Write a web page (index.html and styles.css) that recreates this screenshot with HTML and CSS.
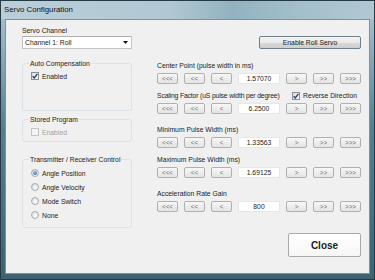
FILE: index.html
```html
<!DOCTYPE html>
<html lang="en">
<head>
    <meta charset="UTF-8">
    <title>Servo Configuration</title>
    <link rel="stylesheet" href="styles.css">
</head>
<body>
    <div class="window">
        <div class="titlebar">Servo Configuration</div>

        <div class="client">
            <!-- Left column: channel + option groups -->
            <div class="left-col">
                <div class="label">Servo Channel</div>
                <div class="combo">
                    <span>Channel 1: Roll</span>
                    <svg class="combo-arrow" width="5" height="3" viewBox="0 0 5 3"><path d="M0 0h5L2.5 3z" fill="#111"/></svg>
                </div>

                <fieldset class="group group-auto">
                    <legend>Auto Compensation</legend>
                    <div class="check-row">
                        <span class="check"><svg width="6" height="6" viewBox="0 0 6 6"><path d="M0.6 3.2L2.3 5L5.4 0.8" fill="none" stroke="#2b3f6c" stroke-width="1.3"/></svg></span>
                        Enabled
                    </div>
                </fieldset>

                <fieldset class="group group-stored">
                    <legend>Stored Program</legend>
                    <div class="check-row disabled">
                        <span class="check"></span>
                        Enabled
                    </div>
                </fieldset>

                <fieldset class="group group-control">
                    <legend>Transmitter / Receiver Control</legend>
                    <div class="radio-row"><span class="radio selected"></span>Angle Position</div>
                    <div class="radio-row"><span class="radio"></span>Angle Velocity</div>
                    <div class="radio-row"><span class="radio"></span>Mode Switch</div>
                    <div class="radio-row"><span class="radio"></span>None</div>
                </fieldset>
            </div>

            <!-- Right column: steppers -->
            <div class="right-col">
                <button class="btn btn-enable">Enable Roll Servo</button>

                <div class="param">
                    <div class="param-head"><span class="label">Center Point (pulse width in ms)</span></div>
                    <div class="stepper">
                        <button class="step">&lt;&lt;&lt;</button>
                        <button class="step">&lt;&lt;</button>
                        <button class="step">&lt;</button>
                        <div class="value">1.57070</div>
                        <button class="step">&gt;</button>
                        <button class="step">&gt;&gt;</button>
                        <button class="step">&gt;&gt;&gt;</button>
                    </div>
                </div>

                <div class="param tight">
                    <div class="param-head">
                        <span class="label narrow">Scaling Factor (uS pulse width per degree)</span>
                        <span class="check-row reverse">
                            <span class="check"><svg width="6" height="6" viewBox="0 0 6 6"><path d="M0.6 3.2L2.3 5L5.4 0.8" fill="none" stroke="#2b3f6c" stroke-width="1.3"/></svg></span>
                            Reverse Direction
                        </span>
                    </div>
                    <div class="stepper">
                        <button class="step">&lt;&lt;&lt;</button>
                        <button class="step">&lt;&lt;</button>
                        <button class="step">&lt;</button>
                        <div class="value">6.2500</div>
                        <button class="step">&gt;</button>
                        <button class="step">&gt;&gt;</button>
                        <button class="step">&gt;&gt;&gt;</button>
                    </div>
                </div>

                <div class="param">
                    <div class="param-head"><span class="label">Minimum Pulse Width (ms)</span></div>
                    <div class="stepper">
                        <button class="step">&lt;&lt;&lt;</button>
                        <button class="step">&lt;&lt;</button>
                        <button class="step">&lt;</button>
                        <div class="value">1.33563</div>
                        <button class="step">&gt;</button>
                        <button class="step">&gt;&gt;</button>
                        <button class="step">&gt;&gt;&gt;</button>
                    </div>
                </div>

                <div class="param tight">
                    <div class="param-head"><span class="label">Maximum Pulse Width (ms)</span></div>
                    <div class="stepper">
                        <button class="step">&lt;&lt;&lt;</button>
                        <button class="step">&lt;&lt;</button>
                        <button class="step">&lt;</button>
                        <div class="value">1.69125</div>
                        <button class="step">&gt;</button>
                        <button class="step">&gt;&gt;</button>
                        <button class="step">&gt;&gt;&gt;</button>
                    </div>
                </div>

                <div class="param">
                    <div class="param-head"><span class="label">Acceleration Rate Gain</span></div>
                    <div class="stepper">
                        <button class="step">&lt;&lt;&lt;</button>
                        <button class="step">&lt;&lt;</button>
                        <button class="step">&lt;</button>
                        <div class="value">800</div>
                        <button class="step">&gt;</button>
                        <button class="step">&gt;&gt;</button>
                        <button class="step">&gt;&gt;&gt;</button>
                    </div>
                </div>

                <button class="btn btn-close">Close</button>
            </div>
        </div>
    </div>
</body>
</html>
```

FILE: styles.css
```css
/* General */
body {
    margin: 0;
    font-family: 'Liberation Sans', Arial, sans-serif;
    font-size: 6.8px;
    color: #222;
    background: #fff;
}

.window {
    width: 375px;
    height: 280px;
    box-sizing: border-box;
    border: 1px solid #243b46;
    display: flex;
    flex-direction: column;
    background: linear-gradient(to bottom, #b3cad6 0, #9fbbc9 24px, #587f90 45%, #3f6272 100%);
}

/* Title bar */
.titlebar {
    height: 18px;
    padding-left: 3px;
    line-height: 18px;
    font-size: 7.8px;
    color: #111;
    background: linear-gradient(to right, #b9ced9 0%, #b1c8d4 45%, #93b2c1 62%, #a3bfcc 80%, #b0c8d3 100%);
}

.client {
    flex: 1;
    margin: 0 4px 5px 4px;
    border: 1px solid #7d929c;
    background: #f0f0f0;
    display: flex;
    gap: 25px;
    padding: 6px 8px 0 16px;
}

.label {
    line-height: 9px;
    white-space: nowrap;
}

.label.narrow {
    letter-spacing: -0.15px;
}

/* Left column */
.left-col {
    width: 110px;
    display: flex;
    flex-direction: column;
}

.combo {
    margin-top: 1px;
    height: 13px;
    box-sizing: border-box;
    border: 1px solid #c4c4c4;
    border-top-color: #b0b0b0;
    background: #fff;
    display: flex;
    align-items: center;
    justify-content: space-between;
    padding: 0 3px 0 2px;
    line-height: 9px;
}

.group {
    margin: 0;
    min-width: 0;
    border: 1px solid #dbe3e8;
    border-radius: 3px;
    padding: 0 0 0 8px;
}

.group legend {
    padding: 0 1px;
    margin-left: -2px;
    line-height: 9px;
    font-size: 6.8px;
}

.group-auto {
    margin-top: 10px;
    padding-bottom: 29px;
}

.group-stored {
    margin-top: 4px;
    padding-bottom: 4px;
}

.group-control {
    margin-top: 13px;
    padding-bottom: 5px;
}

.check-row {
    height: 10px;
    margin-top: 3px;
    display: flex;
    align-items: center;
    gap: 3px;
    line-height: 9px;
}

.check-row.disabled {
    color: #a3a3a3;
}

.check {
    width: 8px;
    height: 8px;
    box-sizing: border-box;
    border: 1px solid #8e8f8f;
    background: linear-gradient(135deg, #d8dde3, #fbfbfb);
    display: flex;
    align-items: center;
    justify-content: center;
}

.disabled .check {
    border-color: #c6c6c6;
    background: #f4f4f4;
}

.radio-row {
    height: 14px;
    display: flex;
    align-items: center;
    gap: 3px;
    line-height: 9px;
}

.radio-row:first-of-type {
    margin-top: 2px;
}

.radio {
    width: 8px;
    height: 8px;
    box-sizing: border-box;
    border: 1px solid #a8acb0;
    border-radius: 50%;
    background: radial-gradient(circle at 60% 65%, #fcfcfc, #d3d8dd);
    display: flex;
    align-items: center;
    justify-content: center;
}

.radio.selected::after {
    content: '';
    width: 4px;
    height: 4px;
    border-radius: 50%;
    background: radial-gradient(circle at 40% 35%, #8ac0ea, #215c94);
}

/* Right column */
.right-col {
    width: 204px;
    display: flex;
    flex-direction: column;
}

.btn {
    font-family: inherit;
    padding: 0;
    color: #1a1a1a;
    box-sizing: border-box;
    cursor: pointer;
}

.btn-enable {
    align-self: flex-end;
    margin-top: 10px;
    margin-bottom: 1px;
    width: 102px;
    height: 13px;
    font-size: 6.8px;
    border: 1px solid #6f7f8c;
    border-radius: 2px;
    background: linear-gradient(to bottom, #f4f4f4 0%, #e9e9e9 50%, #d9d9d9 51%, #cfcfcf 100%);
}

.param {
    margin-top: 11px;
}

.param.tight {
    margin-top: 7px;
}

.param-head {
    display: flex;
    justify-content: space-between;
    align-items: center;
    height: 9px;
}

.check-row.reverse {
    margin: 0 4px 0 0;
    height: 9px;
}

.stepper {
    margin-top: 3px;
    display: flex;
    gap: 6px;
}

.step {
    width: 21px;
    height: 11px;
    padding: 0;
    font-family: inherit;
    font-size: 6.3px;
    line-height: 9px;
    color: #707070;
    border: 1px solid #b0b0b0;
    border-radius: 2px;
    background: linear-gradient(to bottom, #f7f7f7, #e4e4e4);
}

.value {
    width: 42px;
    height: 11px;
    box-sizing: border-box;
    border: 1px solid #e6e6e6;
    background: #fff;
    text-align: center;
    line-height: 9px;
}

.btn-close {
    align-self: flex-end;
    margin-top: 21px;
    width: 73px;
    height: 24px;
    font-size: 10px;
    font-weight: bold;
    border: 1px solid #a9a9a9;
    border-radius: 2px;
    background: linear-gradient(to bottom, #ffffff, #f6f6f6);
}
```
